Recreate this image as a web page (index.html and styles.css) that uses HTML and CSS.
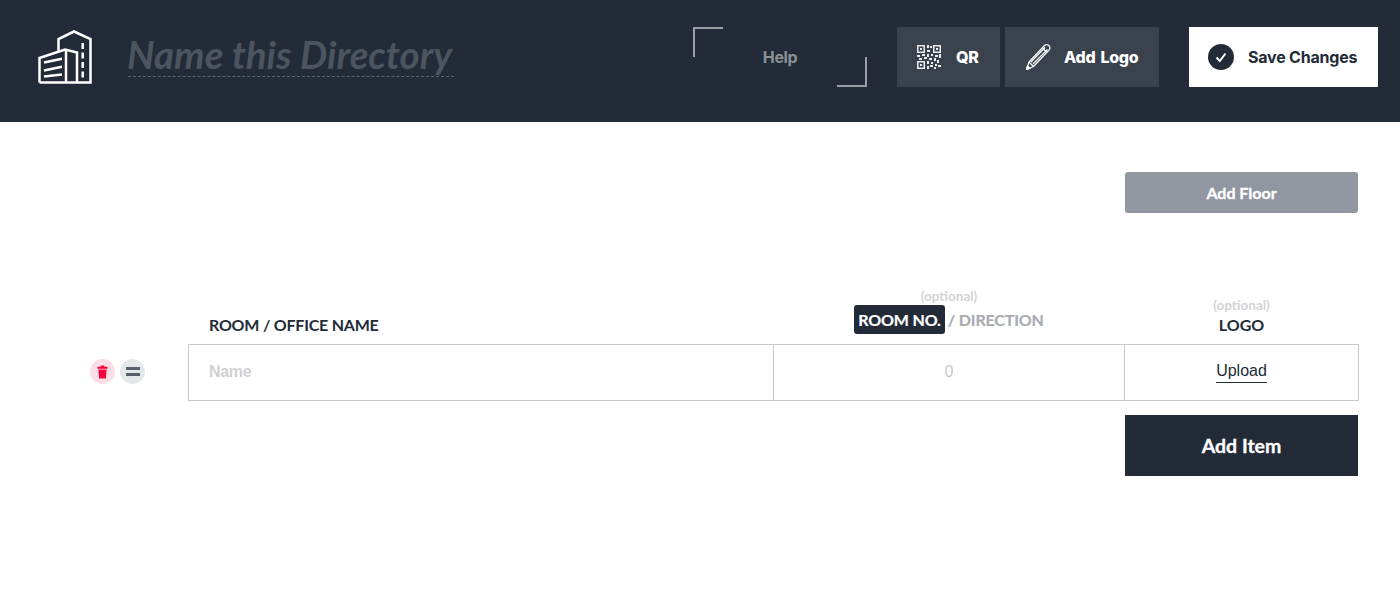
FILE: index.html
```html
<!DOCTYPE html>
<html lang="en">
<head>
<meta charset="utf-8">
<title>Directory</title>
<link rel="stylesheet" href="styles.css">
</head>
<body>
<header class="topbar">
  <svg class="logo" viewBox="0 0 54 54" width="54" height="54" fill="none" stroke="#fff" stroke-width="2.500">
    <path d="M1.500 52.500V28L27 19.500L39 22.500V52.500"/>
    <path d="M28 52.500V20M20.500 21.500V9L36 1.500L52.500 9V52.500H1.500"/>
    <path d="M6 32.500L24 28.800M6 40.500L24 36.800M6 46.500L24 44.500"/>
    <path d="M44.700 13V48" stroke-dasharray="6 3.500"/>
  </svg>
  <div class="title">Name this Directory</div>
  <div class="help">Help</div>
  <div class="tool tool-qr">
    <svg class="qr" viewBox="0 0 24 24" width="24" height="24" fill="#e9eaec">
      <path fill-rule="evenodd" d="M0 0h8v8H0zM1.500 1.500v5h5v-5zM16 0h8v8h-8zM17.500 1.500v5h5v-5zM0 16h8v8H0zM1.500 17.500v5h5v-5z"/>
      <path d="M3 3h2v2H3zM19 3h2v2h-2zM3 19h2v2H3zM10 0h2v3h-2zM13 1h2v2h-2zM10 5h3v2h-3zM0 10h3v2H0zM5 9h3v2H5zM10 9h2v3h-2zM14 9h2v2h-2zM18 10h3v2h-3zM22 9h2v4h-2zM2 13h3v2H2zM7 12h3v2H7zM12 13h3v2h-3zM17 13h2v3h-2zM10 16h2v3h-2zM14 17h2v2h-2zM20 15h2v3h-2zM13 20h3v2h-3zM18 19h2v2h-2zM21 20h3v2h-3zM10 21h2v3h-2zM17 22h2v2h-2z"/>
    </svg>
    <span>QR</span>
  </div>
  <div class="tool tool-logo">
    <svg class="pencil" viewBox="0 0 26 28" width="26" height="28" fill="none" stroke="#fff" stroke-width="1.200" stroke-linejoin="round">
      <path d="M1.500 26.500L4 19L19.500 2.500C21 1.200 22.500 1.200 24 2.700C25.300 4.200 25.200 5.700 24 7.200L8.500 23.500Z"/>
      <path d="M17.500 5L22 9.500M4 19L8.500 23.500M6 19L20 4.500M8 21L22.500 6.500"/>
      <path d="M1.500 26.500L2.500 23L5 25.500Z" fill="#fff"/>
    </svg>
    <span>Add Logo</span>
  </div>
  <div class="save">
    <span class="save-badge">
      <svg viewBox="0 0 26 26" width="26" height="26" fill="none" stroke="#fff" stroke-width="2"><path d="M8.500 13.500L11.800 17L17.500 9.500"/></svg>
    </span>
    <span>Save Changes</span>
  </div>
</header>

<main class="board">
  <button class="add-floor">Add Floor</button>

  <div class="head head-name">ROOM / OFFICE NAME</div>
  <div class="head head-room">
    <div class="optional">(optional)</div>
    <div class="room-switch"><span class="room-chip">ROOM NO.</span><span class="room-alt">/ DIRECTION</span></div>
  </div>
  <div class="head head-logo">
    <div class="optional">(optional)</div>
    <div>LOGO</div>
  </div>

  <div class="handles">
    <span class="handle handle-del">
      <svg viewBox="0 0 12 14" width="11" height="14" fill="#f5003c"><path d="M4.200 0h3.600v1.300H11.500V3.400H.5V1.300H4.200zM1.500 4.300h9L9.700 14H2.300z"/></svg>
    </span>
    <span class="handle handle-move"><i></i><i></i></span>
  </div>
  <div class="cell cell-name">Name</div>
  <div class="cell cell-room">0</div>
  <div class="cell cell-logo"><span class="upload">Upload</span></div>

  <button class="add-item">Add Item</button>
</main>
</body>
</html>
```
FILE: styles.css
```css
*, *::before, *::after { box-sizing: border-box; }
html, body { margin: 0; padding: 0; }
body { background: #fff; font-family: "Lato", "Liberation Sans", sans-serif; height: 600px; overflow: hidden; }

.topbar {
  height: 122px;
  background: #222b37;
  display: flex;
  align-items: flex-start;
  padding: 27px 22px 0 38px;
}
.logo { margin-top: 3px; flex: none; }
.title {
  margin-left: 36px;
  margin-top: 5px;
  width: 326px;
  height: 45px;
  border-bottom: 1px dashed #5c6470;
  color: #4c545f;
  font: italic 700 38.500px/44px "Lato", sans-serif;
  text-indent: -1px;
  white-space: nowrap;
}
.help {
  position: relative;
  margin-left: 239px;
  width: 174px;
  height: 60px;
  display: flex;
  align-items: center;
  justify-content: center;
  color: #8b9097;
  font: 700 16px "Inter", "Liberation Sans", sans-serif;
  letter-spacing: -.4px;
}
.help::before, .help::after {
  content: "";
  position: absolute;
  width: 30px;
  height: 30px;
  border: 0 solid #9a9ea5;
}
.help::before { left: 0; top: 0; border-width: 2px 0 0 2px; }
.help::after { right: 0; bottom: 0; border-width: 0 2px 2px 0; }

.tool {
  height: 60px;
  background: #3a424d;
  color: #fff;
  display: flex;
  align-items: center;
  padding-bottom: 1px;
  font: 800 16px "Inter", "Liberation Sans", sans-serif;
  letter-spacing: -.3px;
  word-spacing: 2px;
}
.tool-qr { margin-left: 30px; width: 103px; padding-left: 20px; gap: 15px; }
.tool-logo { margin-left: 5px; width: 154px; padding-left: 20px; gap: 13px; }

.save {
  margin-left: 30px;
  width: 189px;
  height: 60px;
  background: #fff;
  color: #222b37;
  display: flex;
  align-items: center;
  padding: 0 0 1px 19px;
  gap: 14px;
  font: 700 16px "Inter", "Liberation Sans", sans-serif;
  letter-spacing: -.2px;
  white-space: nowrap;
}
.save-badge { width: 26px; height: 26px; border-radius: 50%; background: #222b37; flex: none; display: block; margin-top: 1px; }
.save-badge svg { display: block; }

.board {
  display: grid;
  grid-template-columns: 188px 586px 350px 235px;
  grid-template-rows: 41px 131px 57px auto;
  padding-top: 50px;
}
.add-floor {
  grid-column: 4;
  grid-row: 1;
  margin: 0 1px;
  border: 0;
  padding: 0;
  border-radius: 3px;
  background: #9196a0;
  color: #fff;
  font: 700 16px "Lato", sans-serif;
  -webkit-text-stroke: .3px #fff;
}
.head { font-weight: 700; font-size: 16px; color: #222b37; align-self: end; }
.head-name { grid-column: 2; grid-row: 2; padding: 0 0 9px 21px; line-height: 20px; letter-spacing: -.22px; }
.head-room { grid-column: 3; grid-row: 2; text-align: center; padding-bottom: 10px; letter-spacing: -.15px; }
.head-logo { grid-column: 4; grid-row: 2; text-align: center; padding-bottom: 9px; line-height: 20px; }
.optional { font-size: 13.500px; line-height: 14px; font-weight: 700; color: #d2d3d6; letter-spacing: 0; }
.head-room .optional { margin-bottom: 2px; }
.head-logo .optional { margin-bottom: 3px; }
.room-switch { display: flex; justify-content: center; align-items: center; }
.room-chip { background: #222b37; color: #fff; border-radius: 3px; height: 29px; line-height: 29px; padding: 0 4px; -webkit-text-stroke: .2px #fff; }
.room-alt { color: #a9acb1; margin-left: 3px; -webkit-text-stroke: .2px #a9acb1; }

.handles { grid-column: 1; grid-row: 3; display: flex; align-items: center; gap: 5px; padding: 0 0 2px 90px; }
.handle { width: 25px; height: 25px; border-radius: 50%; display: flex; align-items: center; justify-content: center; }
.handle-del { background: #fadfe6; }
.handle-move { background: #e6e7ea; flex-direction: column; gap: 3px; }
.handle-move i { display: block; width: 14px; height: 3px; background: #5a606a; }

.cell {
  grid-row: 3;
  border: 1px solid #c9c9c9;
  display: flex;
  align-items: center;
  padding-bottom: 2px;
  font: 400 16px "Liberation Sans", sans-serif;
  color: #c8c8c8;
}
.cell-name { grid-column: 2; padding-left: 20px; font-weight: 700; color: #d0d0d0; letter-spacing: -.3px; }
.cell-room { grid-column: 3; border-left: 0; border-right: 0; justify-content: center; }
.cell-logo { grid-column: 4; justify-content: center; color: #222b37; padding-bottom: 0; }
.upload { border-bottom: 1px solid #222b37; padding-bottom: 2px; line-height: 18px; }

.add-item {
  grid-column: 4;
  grid-row: 4;
  height: 61px;
  margin: 14px 1px 0;
  border: 0;
  padding: 0;
  background: #222b37;
  color: #fff;
  font: 700 19.500px "Lato", sans-serif;
  -webkit-text-stroke: .3px #fff;
}
```
